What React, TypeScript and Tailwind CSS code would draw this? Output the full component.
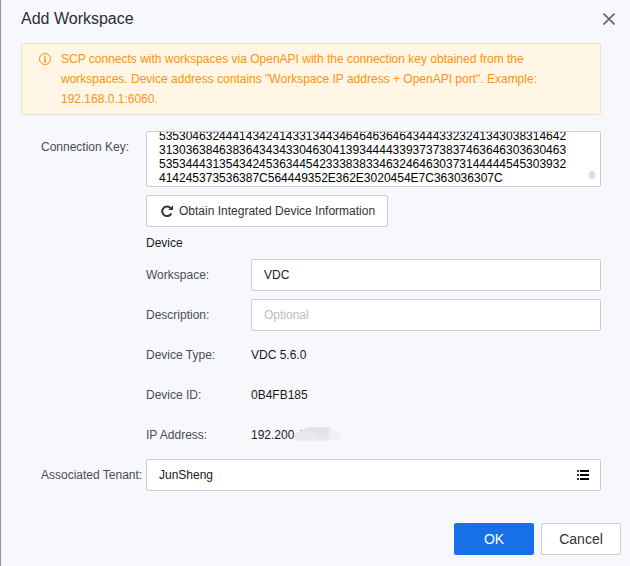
import type { ReactNode } from 'react';

const CONNECTION_KEY = [
    '5353046324441434241433134434646463646434443323241343038314642',
    '3130363846383643434330463041393444433937373837463646303630463',
    '5353444313543424536344542333838334632464630373144444545303932',
    '414245373536387C564449352E362E3020454E7C363036307C',
];

function DeviceRow({ label, children }: { label: string; children: ReactNode }) {
    return (
        <div className="flex h-8 items-center">
            <span className="w-[105px] shrink-0 text-[#4b4d52]">{label}</span>
            {children}
        </div>
    );
}

function InfoIcon() {
    return (
        <svg className="mt-1 mr-2.5 shrink-0" width="12" height="12" viewBox="0 0 12 12" fill="none" stroke="#ff9214">
            <circle cx="6" cy="6" r="5.5" strokeWidth="1" />
            <path d="M6 2.4v1.5M6 4.8V9.2" strokeWidth="1.5" />
            <path d="M4.8 5.2h1.2M4.7 9h2.6" strokeWidth="0.8" />
        </svg>
    );
}

function RefreshIcon() {
    return (
        <svg width="12" height="12" viewBox="0 0 12 12" fill="none">
            <path d="M9.6 3.1A4.8 4.8 0 1 0 10.3 8.5" stroke="#333" strokeWidth="2" />
            <path d="M12 0.3V5H7.3z" fill="#333" />
        </svg>
    );
}

function ListIcon() {
    return (
        <svg width="12" height="10" viewBox="0 0 12 10" fill="#000" shapeRendering="crispEdges">
            <path d="M0 0h2v2H0zM0 4h2v2H0zM0 8h2v2H0z" fill="#333" />
            <path d="M3 0h9v2H3zM3 4h9v2H3zM3 8h9v2H3z" />
        </svg>
    );
}

export default function App() {
    return (
        <div className="flex h-[566px] w-[630px] flex-col border-l border-[#929397] bg-[#f7f8fb] font-['Liberation_Sans',Arial,sans-serif] text-xs text-[#1a1a1a]">
            <header className="flex h-[43px] shrink-0 items-start justify-between pt-[7px] pr-[15px] pl-5">
                <h1 className="text-base leading-6 text-[#2b2d33]">Add Workspace</h1>
                <button aria-label="Close" className="mt-1.5">
                    <svg width="12" height="12" viewBox="0 0 12 12" stroke="#666" strokeWidth="1.7">
                        <path d="M0.5 0.5l11 11M11.5 0.5l-11 11" />
                    </svg>
                </button>
            </header>

            <div className="mr-[29px] ml-5 flex h-[72px] shrink-0 rounded-xs border border-[#ede3cc] bg-[#fff6e5] pt-[5px] pl-[17px] leading-5 text-[#ff9214]">
                <InfoIcon />
                <p className="w-[490px]">
                    SCP connects with workspaces via OpenAPI with the connection key obtained from the
                    workspaces. Device address contains "Workspace IP address + OpenAPI port". Example:
                    192.168.0.1:6060.
                </p>
            </div>

            <div className="mt-4 mr-[29px] ml-10 flex">
                <span className="w-[105px] shrink-0 leading-8 text-[#4b4d52]">Connection Key:</span>
                <div className="flex min-w-0 flex-1 flex-col">
                    <div className="flex h-14 items-end justify-between overflow-hidden rounded-xs border border-[#c9cdd9] bg-white pr-[5px] pb-px pl-3 text-black">
                        <div className="leading-[14px]">
                            {CONNECTION_KEY.map((line) => (
                                <div key={line}>{line}</div>
                            ))}
                        </div>
                        <div className="mb-1.5 h-2 w-1.5 rounded-full bg-[#dcdee6]" />
                    </div>

                    <button className="mt-2 flex h-8 w-[242px] items-center gap-1.5 rounded-xs border border-[#c9cdd9] bg-white pl-3.5 text-[#333]">
                        <RefreshIcon />
                        Obtain Integrated Device Information
                    </button>

                    <h2 className="mt-2 leading-4">Device</h2>

                    <div className="mt-2 flex flex-col gap-2">
                        <DeviceRow label="Workspace:">
                            <input
                                className="h-8 min-w-0 flex-1 rounded-xs border border-[#c9cdd9] bg-white px-3 outline-none"
                                defaultValue="VDC"
                            />
                        </DeviceRow>
                        <DeviceRow label="Description:">
                            <input
                                className="h-8 min-w-0 flex-1 rounded-xs border border-[#c9cdd9] bg-white px-3 outline-none placeholder:text-[#bdbdbd]"
                                placeholder="Optional"
                            />
                        </DeviceRow>
                        <DeviceRow label="Device Type:">VDC 5.6.0</DeviceRow>
                        <DeviceRow label="Device ID:">0B4FB185</DeviceRow>
                        <DeviceRow label="IP Address:">
                            192.200
                            {/* rest of the address is smudged out */}
                            <svg className="-mt-0.5" width="48" height="14" viewBox="0 0 48 14">
                                <path d="M0 10Q0 6 5 4.5L10 3Q12 0 16 0H31Q36 0 38 3Q46 4 46.5 8Q46 13 38 13.5H7Q0 14 0 10z" fill="#eeeff1" />
                                <path d="M0 10Q0 6 5 4.5L10 3Q12 0 16 0H31Q35 0 35 1V13.5H7Q0 14 0 10z" fill="#e8e9eb" />
                                <path d="M10 3Q12 0 16 0H31Q35 0 35 1V9H22V5H10z" fill="#e3e4e6" />
                                <path d="M6.5 3h2v1h-2z" fill="#a9abaf" />
                            </svg>
                        </DeviceRow>
                    </div>
                </div>
            </div>

            <div className="mt-2 mr-[29px] ml-10 flex h-8 shrink-0 items-center">
                <span className="w-[105px] shrink-0 whitespace-nowrap text-[#4b4d52]">Associated Tenant:</span>
                <div className="flex h-8 flex-1 items-center justify-between rounded-xs border border-[#c9cdd9] bg-white pr-[11px] pl-3">
                    JunSheng
                    <ListIcon />
                </div>
            </div>

            <footer className="mt-8 mr-[9px] flex justify-end gap-[7px] text-sm">
                <button className="h-8 w-20 rounded-xs bg-[#1870e8] text-white">OK</button>
                <button className="h-8 w-20 rounded-xs border border-[#c9cdd9] bg-white text-[#333]">Cancel</button>
            </footer>
        </div>
    );
}
